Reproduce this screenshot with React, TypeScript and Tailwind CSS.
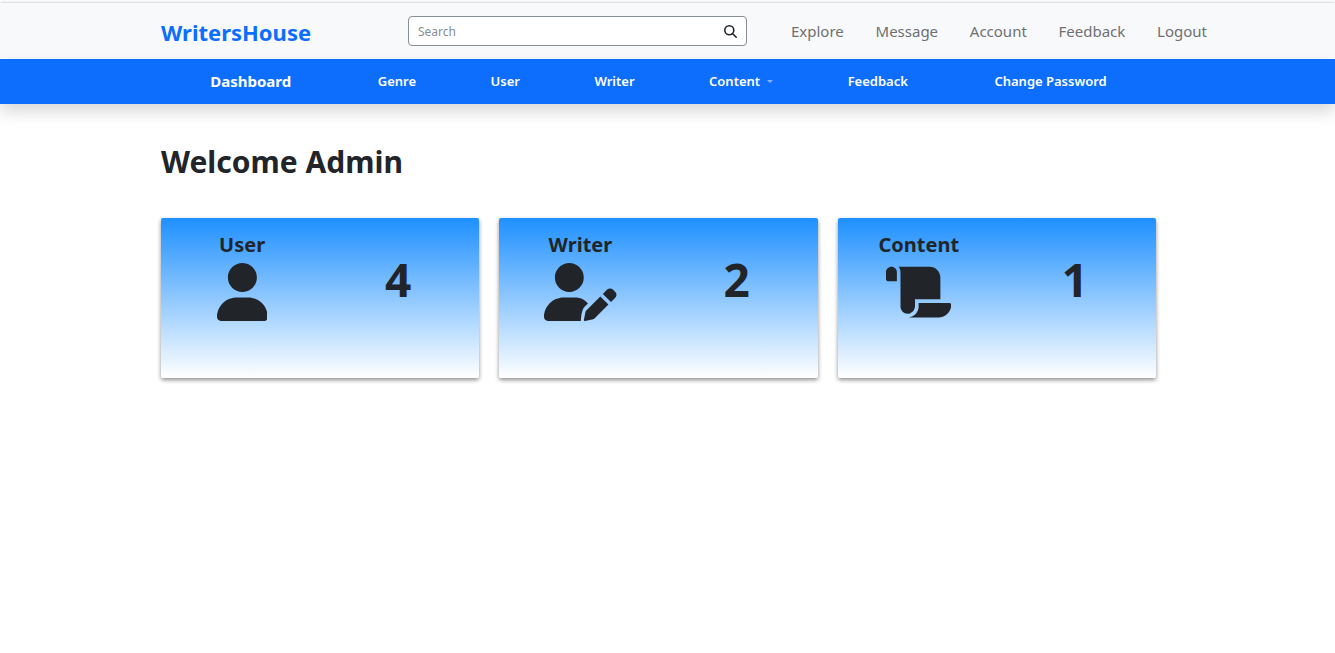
import React from "react";

const topLinks = ["Explore", "Message", "Account", "Feedback", "Logout"];

type IconProps = { viewBox: string; d: string };

function Icon({ viewBox, d }: IconProps) {
  return (
    <svg viewBox={viewBox} className="h-[58px] w-auto" fill="currentColor" aria-hidden="true">
      <path d={d} />
    </svg>
  );
}

const cards = [
  {
    title: "User",
    count: 4,
    viewBox: "0 0 448 512",
    d: "M224 256c70.7 0 128-57.31 128-128s-57.3-128-128-128C153.3 0 96 57.31 96 128S153.3 256 224 256zM274.7 304H173.3C77.61 304 0 381.6 0 477.3c0 19.14 15.52 34.67 34.66 34.67h378.7C432.5 512 448 496.5 448 477.3C448 381.6 370.4 304 274.7 304z",
  },
  {
    title: "Writer",
    count: 2,
    viewBox: "0 0 640 512",
    d: "M223.1 256c70.7 0 128-57.31 128-128s-57.3-128-128-128C153.3 0 96 57.31 96 128S153.3 256 223.1 256zM274.7 304H173.3C77.61 304 0 381.7 0 477.3C0 496.5 15.52 512 34.66 512H325C327 470 334 425 348 400C358 384 374 372 388 358C362 322 321.2 304 274.7 304zM371.4 420.6c-2.514 2.512-4.227 5.715-4.924 9.203l-14.28 71.41c-1.258 6.289 4.293 11.84 10.59 10.59l71.42-14.29c3.482-.6992 6.682-2.406 9.195-4.922l125.3-125.3l-72.01-72.01L371.4 420.6zM629.5 255.7l-21.1-21.11c-14.06-14.06-36.85-14.06-50.91 0l-38.13 38.14l72.01 72.01l38.13-38.13C643.5 292.5 643.5 269.7 629.5 255.7z",
  },
  {
    title: "Content",
    count: 1,
    viewBox: "0 0 576 512",
    d: "M48 32C21.5 32 0 53.5 0 80v64C0 152.9 7.125 160 16 160H96V80C96 53.5 74.5 32 48 32zM256 380.6V320h224V128c0-53-43-96-96-96H111.6C121.8 45.38 128 61.88 128 80V384c0 38.88 34.62 69.63 74.75 63.13C234.3 442 256 412.5 256 380.6zM288 352v32c0 52.88-43 96-96 96h272c61.88 0 112-50.13 112-112c0-8.875-7.125-16-16-16H288z",
  },
];

export default function App() {
  return (
    <div className="min-h-screen bg-white pt-[3px] font-['Noto_Sans',sans-serif] text-[#212529]">
      <header className="flex h-14 items-center bg-[#f8f9fa] pr-[128px] pl-[161px] shadow-[0_0_3px_rgba(0,0,0,0.3)]">
        <a href="#" className="w-[247px] pt-0.5 text-[22px] leading-8 font-bold text-[#0d6efd]">
          WritersHouse
        </a>
        <form
          role="search"
          className="flex h-[30px] w-[339px] rounded-[4px] border border-[#868e96] bg-white"
          onSubmit={(e) => e.preventDefault()}
        >
          <input
            type="search"
            aria-label="Search"
            placeholder="Search"
            className="min-w-0 flex-1 rounded-l-[4px] bg-transparent px-[9px] pt-px text-xs outline-none placeholder:text-[#868e96]"
          />
          <button type="submit" aria-label="Submit search" className="flex w-[31px] items-center justify-center">
            <svg
              viewBox="0 0 13 13"
              className="size-[13px]"
              fill="none"
              stroke="currentColor"
              strokeWidth="1.6"
              strokeLinecap="round"
              aria-hidden="true"
            >
              <circle cx="5.3" cy="5.3" r="4.5" />
              <path d="M8.7 8.7l3.5 3.5" />
            </svg>
          </button>
        </form>
        <nav aria-label="Account" className="flex flex-1 justify-between pl-11 text-[15px] leading-6 text-[#6f7072]">
          {topLinks.map((label) => (
            <a key={label} href="#">
              {label}
            </a>
          ))}
        </nav>
      </header>

      <nav
        aria-label="Admin"
        className="relative flex h-[45px] items-center justify-around bg-[#0d6efd] pr-[179px] pl-[161px] text-[13px] font-semibold text-white shadow-[0_8px_16px_rgba(0,0,0,0.15)]"
      >
        <a href="#" className="px-3 text-[15px] font-bold">
          Dashboard
        </a>
        <a href="#">Genre</a>
        <a href="#">User</a>
        <a href="#">Writer</a>
        <button type="button" className="flex items-center gap-[7px]">
          Content
          <svg viewBox="0 0 6 3" className="h-[3px] w-[6px]" fill="#86b6fe" aria-hidden="true">
            <path d="M0 0h6L3 3z" />
          </svg>
        </button>
        <a href="#">Feedback</a>
        <a href="#" className="px-3">
          Change Password
        </a>
      </nav>

      <main className="pt-[38px] pr-[179px] pl-[161px]">
        <h1 className="text-[30px] leading-10 font-bold">Welcome Admin</h1>
        <div className="mt-9 grid grid-cols-3 gap-5">
          {cards.map((card) => (
            <section
              key={card.title}
              className="grid h-40 grid-cols-2 rounded-[2px] bg-linear-to-b/srgb from-[#1e90ff] to-white px-[3px] pt-3 text-center shadow-[0_2px_4px_rgba(0,0,0,0.45)]"
            >
              <div className="flex flex-col items-center">
                <h2 className="mb-1 text-[20px] leading-[29px] font-bold">{card.title}</h2>
                <Icon viewBox={card.viewBox} d={card.d} />
              </div>
              <p className="pt-6 text-[46px] leading-[50px] font-bold">{card.count}</p>
            </section>
          ))}
        </div>
      </main>
    </div>
  );
}
